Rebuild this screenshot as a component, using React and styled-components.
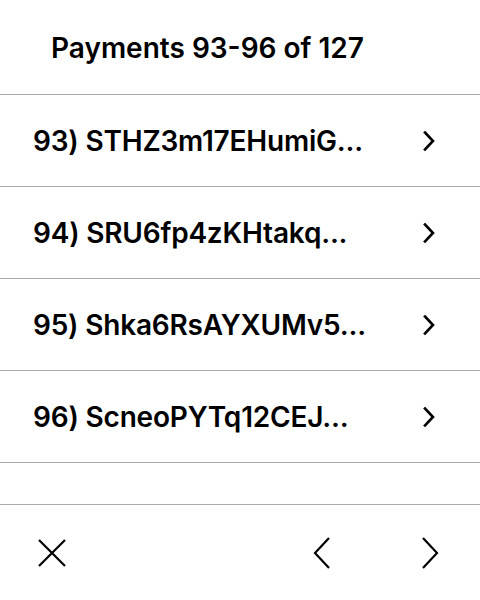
import React from "react";
import styled, { createGlobalStyle } from "styled-components";

const Global = createGlobalStyle`
  html, body { margin: 0; padding: 0; background: #fff; }
  body { font-family: Inter, "Noto Sans", sans-serif; color: #000; }
`;

const Screen = styled.div`
  width: 480px;
  height: 600px;
  display: flex;
  flex-direction: column;
  background: #fff;
  overflow: hidden;
`;

const Header = styled.div`
  height: 95px;
  display: flex;
  align-items: center;
  padding: 0 0 0 51px;
  box-sizing: border-box;
  border-bottom: 1px solid #aaa;
`;

const Title = styled.h1`
  margin: 0;
  font-size: 28px;
  font-weight: 600;
  letter-spacing: 0;
  line-height: 1;
  padding-top: 1px;
`;

const List = styled.div`
  flex: 1;
  display: flex;
  flex-direction: column;
`;

const Row = styled.div`
  height: 92px;
  box-sizing: border-box;
  border-bottom: 1px solid #aaa;
  display: flex;
  align-items: center;
  justify-content: space-between;
  padding: 0 45px 0 33px;
`;

const RowText = styled.span`
  font-size: 28px;
  font-weight: 600;
  letter-spacing: -0.2px;
  line-height: 1;
`;

const Footer = styled.div`
  height: 96px;
  box-sizing: border-box;
  border-top: 1px solid #aaa;
  display: flex;
  align-items: center;
  padding: 0 41px 0 37px;
`;

const IconButton = styled.button`
  border: 0;
  background: none;
  padding: 0;
  display: flex;
  align-items: center;
  justify-content: center;
  margin-left: ${(p) => p.$ml || 0}px;
  cursor: pointer;
`;

const Spacer = styled.div`
  flex: 1;
`;

const SmallChevron = () => (
  <svg width="12" height="20" viewBox="0 0 12 20">
    <polyline points="2,1.5 10,10 2,18.5" fill="none" stroke="#000" strokeWidth="2.6" strokeLinecap="square" strokeLinejoin="miter" />
  </svg>
);

const BigChevron = ({ left }) => (
  <svg width="18" height="32" viewBox="0 0 18 32">
    <polyline
      points={left ? "16,1 2,16 16,31" : "2,1 16,16 2,31"}
      fill="none"
      stroke="#000"
      strokeWidth="2.2"
    />
  </svg>
);

const CloseIcon = () => (
  <svg width="30" height="30" viewBox="0 0 30 30">
    <path d="M2 2 L28 28 M28 2 L2 28" stroke="#000" strokeWidth="2.2" fill="none" />
  </svg>
);

const rows = [
  "93) STHZ3m17EHumiG...",
  "94) SRU6fp4zKHtakq...",
  "95) Shka6RsAYXUMv5...",
  "96) ScneoPYTq12CEJ...",
];

export default function App() {
  return (
    <Screen>
      <Global />
      <Header>
        <Title>Payments 93-96 of 127</Title>
      </Header>
      <List>
        {rows.map((r) => (
          <Row key={r}>
            <RowText>{r}</RowText>
            <SmallChevron />
          </Row>
        ))}
      </List>
      <Footer>
        <IconButton aria-label="Close">
          <CloseIcon />
        </IconButton>
        <Spacer />
        <IconButton aria-label="Previous">
          <BigChevron left />
        </IconButton>
        <IconButton aria-label="Next" $ml={90}>
          <BigChevron />
        </IconButton>
      </Footer>
    </Screen>
  );
}
